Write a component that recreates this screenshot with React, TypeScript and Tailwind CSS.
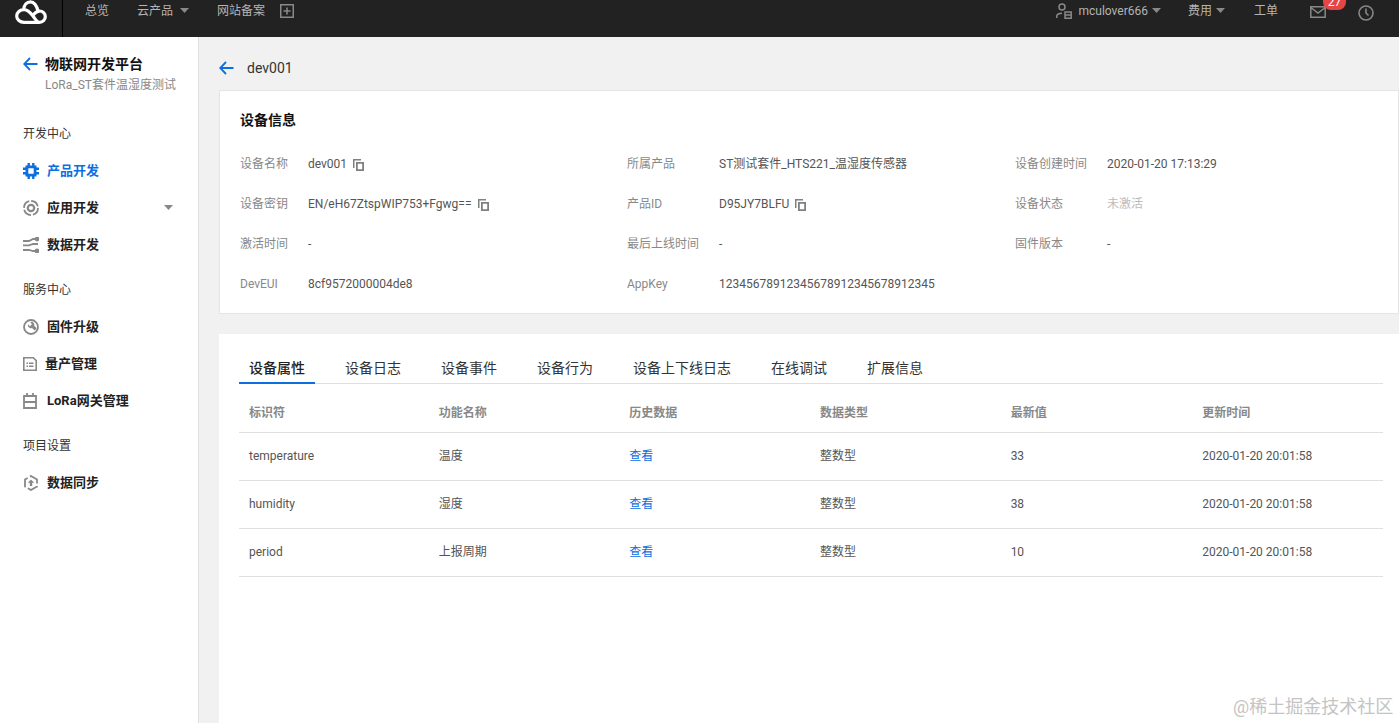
import { ReactNode } from 'react';

const Caret = ({ className }: { className: string }) => (
  <svg width="9" height="5" viewBox="0 0 9 5" className={className}>
    <path d="M0 0h9L4.5 5z" fill="currentColor" />
  </svg>
);

const CopyIcon = () => (
  <svg width="11" height="12" viewBox="0 0 11 12" className="ml-[6px] mt-[2px] shrink-0">
    <path d="M0 0h8v1.5H1.5V9H0z" fill="#808080" />
    <path d="M3 3h8v9H3zM4.8 4.8v5.4h4.4V4.8z" fill="#808080" fillRule="evenodd" />
  </svg>
);

const icons: Record<string, ReactNode> = {
  chip: (
    <svg width="16" height="16" viewBox="0 0 16 16">
      <path d="M2.5 2.5h11v11h-11zM5.3 5.3v5.4h5.4V5.3z" fill="#0d6fde" fillRule="evenodd" />
      <path d="M4.5 0h2.4v3H4.5zM9.1 0h2.4v3H9.1zM4.5 13h2.4v3H4.5zM9.1 13h2.4v3H9.1zM0 4.5h3v2.4H0zM0 9.1h3v2.4H0zM13 4.5h3v2.4h-3zM13 9.1h3v2.4h-3z" fill="#0d6fde" />
    </svg>
  ),
  app: (
    <svg width="16" height="16" viewBox="0 0 16 16" fill="none" stroke="#888">
      <circle cx="8" cy="8" r="3.2" strokeWidth="2.2" />
      <circle cx="8" cy="8" r="7" strokeWidth="1.8" strokeDasharray="9 2" />
    </svg>
  ),
  data: (
    <svg width="16" height="16" viewBox="0 0 16 16" fill="none" stroke="#888" strokeWidth="1.8">
      <path d="M0 4h6l4-2h5M0 8.3h6l4-1.3h5M0 13h6l4 1h5" />
      <circle cx="14" cy="2" r="1.5" fill="#888" />
      <circle cx="14" cy="14" r="1.5" fill="#888" />
    </svg>
  ),
  wrench: (
    <svg width="16" height="16" viewBox="0 0 16 16" fill="none">
      <circle cx="8" cy="8" r="7" stroke="#888" strokeWidth="1.8" />
      <path d="M7.2 3a3 3 0 0 1 4 3.7l2.6 2.6-2.2 2.2L9 8.9a3 3 0 0 1-4-3.7l2 2 1.9-1.9z" fill="#888" />
    </svg>
  ),
  list: (
    <svg width="14" height="14" viewBox="0 0 14 14" fill="none">
      <path d="M.8.8h9.5l2.9 2.9v9.5H.8z" stroke="#888" strokeWidth="1.6" />
      <path d="M3.5 5.5h1.5V7H3.5zM6 5.5h4.5V7H6zM3.5 8.5h1.5V10H3.5zM6 8.5h4.5V10H6z" fill="#888" />
    </svg>
  ),
  gateway: (
    <svg width="14" height="16" viewBox="0 0 14 16" fill="none" stroke="#888" strokeWidth="1.8">
      <path d="M1 3h12v12H1zM1 9h12M4 0v3M10 0v3" />
    </svg>
  ),
  sync: (
    <svg width="16" height="16" viewBox="0 0 16 16" fill="none">
      <path d="M8 1l6 3.5v7L8 15l-6-3.5v-7z" stroke="#888" strokeWidth="1.8" strokeDasharray="11 2.5" />
      <path d="M8 4.5l3.2 3.3H9.2V11H6.8V7.8H4.8z" fill="#888" />
    </svg>
  ),
};

const SideGroup = ({ label }: { label: string }) => (
  <div className="h-[20px] pl-[23px] text-[12px] leading-[20px] text-[#333]">{label}</div>
);

const SideItem = ({
  icon,
  label,
  active,
  caret,
  iconWidth = 'w-[24px]',
}: {
  icon: string;
  label: string;
  active?: boolean;
  caret?: boolean;
  iconWidth?: string;
}) => (
  <div className="relative flex h-[37px] items-center pl-[23px]">
    <span className={`flex ${iconWidth} shrink-0 items-center`}>{icons[icon]}</span>
    <span className={`text-[13px] font-bold ${active ? 'text-[#0d6fde]' : 'text-[#222]'}`}>{label}</span>
    {caret && <Caret className="absolute left-[164px] top-[16px] text-[#888]" />}
  </div>
);

const infoRows: { label: string; value: string; copy?: boolean; muted?: boolean }[][] = [
  [
    { label: '设备名称', value: 'dev001', copy: true },
    { label: '所属产品', value: 'ST测试套件_HTS221_温湿度传感器' },
    { label: '设备创建时间', value: '2020-01-20 17:13:29' },
  ],
  [
    { label: '设备密钥', value: 'EN/eH67ZtspWIP753+Fgwg==', copy: true },
    { label: '产品ID', value: 'D95JY7BLFU', copy: true },
    { label: '设备状态', value: '未激活', muted: true },
  ],
  [
    { label: '激活时间', value: '-' },
    { label: '最后上线时间', value: '-' },
    { label: '固件版本', value: '-' },
  ],
  [
    { label: 'DevEUI', value: '8cf9572000004de8' },
    { label: 'AppKey', value: '12345678912345678912345678912345' },
  ],
];

const tabs = ['设备属性', '设备日志', '设备事件', '设备行为', '设备上下线日志', '在线调试', '扩展信息'];
const columns = ['标识符', '功能名称', '历史数据', '数据类型', '最新值', '更新时间'];
const rows = [
  { id: 'temperature', name: '温度', value: '33' },
  { id: 'humidity', name: '湿度', value: '38' },
  { id: 'period', name: '上报周期', value: '10' },
];

export default function App() {
  return (
    <div
      className="relative h-[723px] overflow-hidden bg-[#f1f1f1] text-[12px]"
      style={{ fontFamily: 'Roboto, "Noto Sans CJK SC", sans-serif' }}
    >
      {/* top bar */}
      <header className="flex h-[37px] bg-[#222222] text-[12px] text-[#b4b4b4]">
        <div className="h-[37px] w-[63px] shrink-0 border-r border-[#000] pl-[15px]">
          <svg width="32" height="24" viewBox="0 0 32 24" fill="none" stroke="#fff" strokeWidth="3.2">
            <path d="M9 22.4C5 22.4 1.7 19.6 1.7 16S5 9.6 9 9.6c3.4 0 6 2.4 9 6.4s4 6.4 6.5 6.4c3.2 0 5.8-2.6 5.8-5.6 0-3.2-2.6-5.8-5.8-5.8-.5 0-1 0-1.5.2C22 6 19 1.8 15.5 1.8 12 1.8 9 4.6 8.7 9.6" />
            <path d="M9 22.4h15.5" />
            <path d="M17.5 16c2-3 4-4.6 7-4.8" />
          </svg>
        </div>
        <div className="flex h-[21px] items-center pl-[22px]">
          <span>总览</span>
          <span className="ml-[28px]">云产品</span>
          <Caret className="ml-[7px] text-[#888]" />
          <span className="ml-[28px]">网站备案</span>
          <svg width="14" height="14" viewBox="0 0 14 14" className="ml-[15px]">
            <path d="M0 0h14v14H0zM1.5 1.5v11h11v-11zM6.2 3.5h1.6v2.7h2.7v1.6H7.8v2.7H6.2V7.8H3.5V6.2h2.7z" fill="#888" fillRule="evenodd" />
          </svg>
        </div>
        <div className="ml-auto flex h-[21px] items-center pr-[25px]">
          <svg width="16" height="16" viewBox="0 0 16 16" fill="none" stroke="#888" strokeWidth="1.5">
            <circle cx="6" cy="4" r="3" />
            <path d="M.8 15v-2c0-1.6 1.4-2.6 5.2-2.8M9 9h6.2v6.2H9zM9 12h6.2" />
          </svg>
          <span className="ml-[6px]">mculover666</span>
          <Caret className="ml-[4px] text-[#888]" />
          <span className="ml-[27px]">费用</span>
          <Caret className="ml-[4px] text-[#888]" />
          <span className="ml-[29px]">工单</span>
          <div className="relative ml-[32px] mt-[3px]">
            <svg width="16" height="12" viewBox="0 0 16 12" fill="none" stroke="#888" strokeWidth="1.5" className="block">
              <path d="M.8.8h14.4v10.4H.8zM.8 1.5L8 7l7.2-5.5" />
            </svg>
            <span className="absolute left-[13px] top-[-13px] flex h-[17px] w-[23px] items-center justify-center rounded-[8px] bg-[#e54545] text-[12px] text-white">
              27
            </span>
          </div>
          <svg width="16" height="16" viewBox="0 0 16 16" fill="none" stroke="#888" strokeWidth="1.6" className="ml-[32px] mt-[4px]">
            <circle cx="8" cy="8" r="7" />
            <path d="M8 3.5V8l2.5 2.5" />
          </svg>
        </div>
      </header>

      <div className="flex h-[686px]">
        {/* sidebar */}
        <aside className="w-[199px] shrink-0 border-r border-[#dfdfdf] bg-white">
          <div className="flex pl-[23px] pt-[18px]">
            <svg width="15" height="14" viewBox="0 0 15 14" fill="none" stroke="#0d6fde" strokeWidth="1.8" className="mr-[7px] mt-[2px]">
              <path d="M14.5 7H1.5M7 1L1.2 7 7 13" />
            </svg>
            <div>
              <div className="text-[14px] font-bold leading-[18px] text-[#111]">物联网开发平台</div>
              <div className="mt-[4px] text-[12px] leading-[16px] text-[#888]">LoRa_ST套件温湿度测试</div>
            </div>
          </div>
          <div className="mt-[31px]">
            <SideGroup label="开发中心" />
            <div className="mt-[8px]">
              <SideItem icon="chip" label="产品开发" active />
              <SideItem icon="app" label="应用开发" caret />
              <SideItem icon="data" label="数据开发" />
            </div>
          </div>
          <div className="mt-[17px]">
            <SideGroup label="服务中心" />
            <div className="mt-[8px]">
              <SideItem icon="wrench" label="固件升级" />
              <SideItem icon="list" label="量产管理" iconWidth="w-[22px]" />
              <SideItem icon="gateway" label="LoRa网关管理" />
            </div>
          </div>
          <div className="mt-[17px]">
            <SideGroup label="项目设置" />
            <div className="mt-[8px]">
              <SideItem icon="sync" label="数据同步" />
            </div>
          </div>
        </aside>

        {/* main */}
        <main className="min-w-0 flex-1 pl-[20px]">
          <div className="flex h-[53px] items-center">
            <svg width="15" height="14" viewBox="0 0 15 14" fill="none" stroke="#0d6fde" strokeWidth="1.8" className="mr-[13px] mt-[9px]">
              <path d="M14.5 7H1.5M7 1L1.2 7 7 13" />
            </svg>
            <span className="mt-[9px] text-[14px] text-[#333]">dev001</span>
          </div>

          <section className="h-[224px] border border-[#e5e5e5] bg-white pl-[20px] pt-[19px]">
            <h2 className="text-[14px] font-bold leading-[20px] text-[#111]">设备信息</h2>
            <div className="mt-[14px]">
              {infoRows.map((row, i) => (
                <div key={i} className="grid h-[40px] grid-cols-[387px_388px_1fr] items-center">
                  {row.map((cell, j) => (
                    <div key={cell.label} className="flex items-center">
                      <span className={`${j === 0 ? 'w-[68px]' : 'w-[92px]'} shrink-0 text-[#888]`}>{cell.label}</span>
                      <span className={cell.muted ? 'text-[#bbb]' : 'text-[#555]'}>{cell.value}</span>
                      {cell.copy && <CopyIcon />}
                    </div>
                  ))}
                </div>
              ))}
            </div>
          </section>

          <section className="mt-[20px] h-[400px] bg-white pl-[20px] pr-[16px] pt-[20px]">
            <div className="flex h-[30px] gap-[20px] border-b border-[#dfdfdf]">
              {tabs.map((tab, i) => (
                <div
                  key={tab}
                  className={`h-[30px] px-[10px] text-[14px] leading-[28px] ${
                    i === 0 ? 'border-b-2 border-[#0d6fde] font-medium text-[#222]' : 'text-[#333]'
                  }`}
                >
                  {tab}
                </div>
              ))}
            </div>
            <table className="w-full table-fixed border-collapse text-left">
              <thead>
                <tr className="h-[48px] border-b border-[#dfdfdf]">
                  {columns.map((c, i) => (
                    <th key={c} className={`${i === 0 || i === 5 ? 'pl-[10px]' : 'pl-[9px]'} pt-[10px] font-bold text-[#888]`}>
                      {c}
                    </th>
                  ))}
                </tr>
              </thead>
              <tbody className="text-[#555]">
                {rows.map((r) => (
                  <tr key={r.id} className="h-[48px] border-b border-[#dfdfdf]">
                    <td className="pl-[10px]">{r.id}</td>
                    <td className="pl-[9px]">{r.name}</td>
                    <td className="pl-[9px] text-[#0d6fde]">查看</td>
                    <td className="pl-[9px]">整数型</td>
                    <td className="pl-[9px]">{r.value}</td>
                    <td className="pl-[10px]">2020-01-20 20:01:58</td>
                  </tr>
                ))}
              </tbody>
            </table>
          </section>
        </main>
      </div>

      {/* site watermark */}
      <div className="absolute left-[1233px] top-[695px] whitespace-nowrap text-[18px] leading-[24px] text-[#c4c4c4]">
        @稀土掘金技术社区
      </div>
    </div>
  );
}
